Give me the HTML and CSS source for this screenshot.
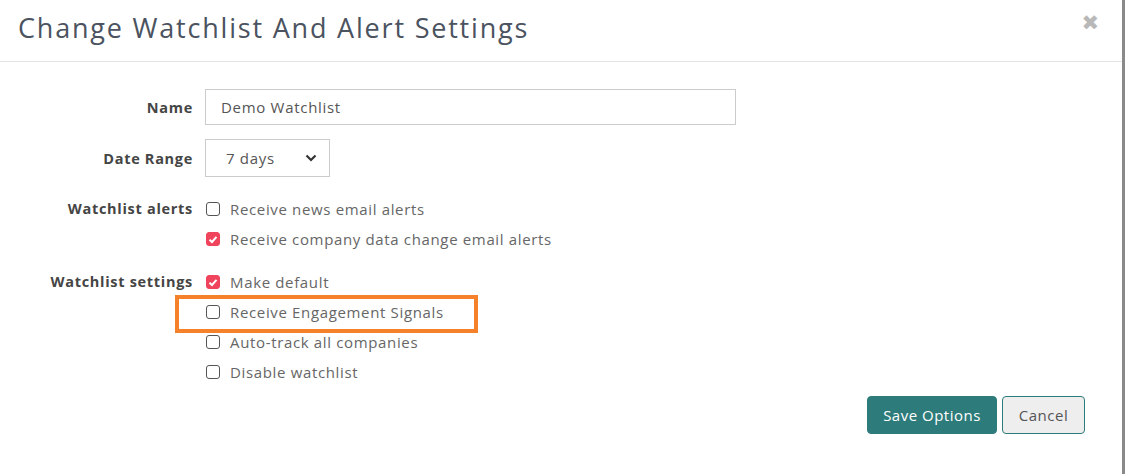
FILE: index.html
```html
<!DOCTYPE html>
<html>
<head>
<meta charset="utf-8">
<link rel="stylesheet" href="styles.css">
</head>
<body>
<div class="modal">
  <div class="modal-header">
    <h1 class="modal-title">Change Watchlist And Alert Settings</h1>
    <span class="close">&#x2716;</span>
  </div>
  <div class="modal-body">
    <div class="form">
      <div class="row row-name">
        <label class="label">Name</label>
        <div class="control"><input class="text-input" type="text" value="Demo Watchlist"></div>
      </div>
      <div class="row row-date">
        <label class="label">Date Range</label>
        <div class="control">
          <div class="select"><span>7 days</span>
            <svg class="chev" width="12" height="8" viewBox="0 0 12 8"><path d="M1.5 1.5 L6 6 L10.5 1.5" fill="none" stroke="#333" stroke-width="2.2"/></svg>
          </div>
        </div>
      </div>
      <div class="row row-group">
        <label class="label label-check">Watchlist alerts</label>
        <div class="control checks">
          <div class="check"><span class="box"></span><span>Receive news email alerts</span></div>
          <div class="check"><span class="box on"><svg width="10" height="9" viewBox="0 0 10 9"><path d="M1.5 4.8 L4 7 L8.5 1.8" fill="none" stroke="#fff" stroke-width="2"/></svg></span><span>Receive company data change email alerts</span></div>
        </div>
      </div>
      <div class="row row-group row-settings">
        <label class="label label-check">Watchlist settings</label>
        <div class="control checks">
          <div class="check"><span class="box on"><svg width="10" height="9" viewBox="0 0 10 9"><path d="M1.5 4.8 L4 7 L8.5 1.8" fill="none" stroke="#fff" stroke-width="2"/></svg></span><span>Make default</span></div>
          <div class="check"><span class="box"></span><span>Receive Engagement Signals</span></div>
          <div class="check"><span class="box"></span><span>Auto-track all companies</span></div>
          <div class="check"><span class="box"></span><span>Disable watchlist</span></div>
        </div>
      </div>
    </div>
    <div class="actions">
      <button class="btn btn-primary">Save Options</button>
      <button class="btn btn-default">Cancel</button>
    </div>
    <div class="highlight"></div>
  </div>
</div>
</body>
</html>
```
FILE: styles.css
```css
html, body {
  margin: 0;
  padding: 0;
  background: #fff;
}
body {
  width: 1125px;
  height: 474px;
  overflow: hidden;
  font-family: "Open Sans", "DejaVu Sans", sans-serif;
}
.modal {
  width: 1122px;
  height: 474px;
  border-right: 3px solid #8a8a8a;
  background: #fff;
  box-sizing: content-box;
}
.modal-header {
  height: 61px;
  border-bottom: 1px solid #e5e5e5;
  display: flex;
  align-items: flex-start;
  justify-content: space-between;
  padding: 0 23px 0 18px;
}
.modal-title {
  margin: 9px 0 0 0;
  font-size: 27px;
  font-weight: 400;
  color: #4b5360;
  letter-spacing: 1.8px;
}
.close {
  margin-top: 11px;
  font-size: 21px;
  color: #b8b8b8;
  font-family: "DejaVu Sans", sans-serif;
}
.modal-body {
  position: relative;
  padding-top: 27px;
}
.form {
  display: flex;
  flex-direction: column;
}
.row {
  display: grid;
  grid-template-columns: 193px 1fr;
  column-gap: 12px;
  align-items: center;
}
.row-date {
  margin-top: 14px;
}
.row-group {
  align-items: start;
  margin-top: 17px;
}
.row-settings {
  margin-top: 13px;
}
.label {
  text-align: right;
  font-weight: 700;
  font-size: 14.5px;
  color: #454545;
  letter-spacing: 0.7px;
}
.label-check {
  line-height: 30px;
}
.text-input {
  width: 531px;
  height: 36px;
  box-sizing: border-box;
  border: 1px solid #cccccc;
  padding: 0 15px;
  font-family: inherit;
  font-size: 15px;
  color: #555;
  outline: none;
  display: block;
  letter-spacing: 0.7px;
}
.select {
  width: 125px;
  height: 38px;
  box-sizing: border-box;
  border: 1px solid #cccccc;
  display: flex;
  align-items: center;
  justify-content: space-between;
  padding: 0 12px 0 20px;
  font-size: 15px;
  color: #555;
  letter-spacing: 0.7px;
}
.checks {
  display: flex;
  flex-direction: column;
}
.check {
  height: 30px;
  display: flex;
  align-items: center;
  font-size: 15px;
  color: #666;
  letter-spacing: 0.65px;
}
.box {
  width: 14px;
  height: 14px;
  box-sizing: border-box;
  border: 1.5px solid #555;
  border-radius: 3px;
  margin: 0 10px 0 1px;
  display: flex;
  align-items: center;
  justify-content: center;
  flex: none;
}
.box.on {
  background: #f0445c;
  border-color: #f0445c;
}
.actions {
  display: flex;
  justify-content: flex-end;
  gap: 5px;
  padding: 9px 37px 0 0;
}
.btn {
  height: 38px;
  box-sizing: border-box;
  border-radius: 4px;
  font-family: inherit;
  font-size: 15px;
  padding: 0;
  letter-spacing: 0.5px;
}
.btn-primary {
  width: 130px;
  background: #2d7b7a;
  border: 1px solid #2d7b7a;
  color: #fff;
}
.btn-default {
  width: 83px;
  background: #eeeeee;
  border: 1px solid #2d7b7a;
  color: #555;
}
.highlight {
  position: absolute;
  left: 175px;
  top: 233px;
  width: 303px;
  height: 38px;
  box-sizing: border-box;
  border: 4px solid #f5822a;
}
```
